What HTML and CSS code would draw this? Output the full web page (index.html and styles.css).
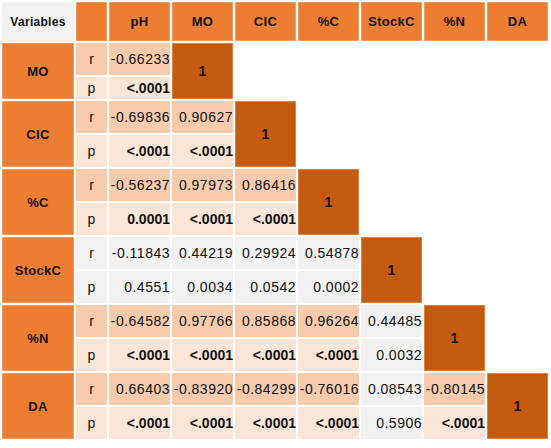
FILE: index.html
```html
<!DOCTYPE html>
<html>
<head>
<meta charset="utf-8">
<link rel="stylesheet" href="styles.css">
</head>
<body>
<table class="corr">
  <colgroup>
    <col class="c-var"><col class="c-rp">
    <col class="c-v"><col class="c-v"><col class="c-v"><col class="c-v"><col class="c-v"><col class="c-v"><col class="c-v">
  </colgroup>
  <thead>
    <tr class="hrow">
      <th class="hv">Variables</th>
      <th class="hd"></th>
      <th class="hd">pH</th>
      <th class="hd">MO</th>
      <th class="hd">CIC</th>
      <th class="hd">%C</th>
      <th class="hd">StockC</th>
      <th class="hd">%N</th>
      <th class="hd">DA</th>
    </tr>
  </thead>
  <tbody>
    <tr class="rr">
      <th class="lab" rowspan="2">MO</th>
      <td class="rp r">r</td>
      <td class="n r">-0.66233</td>
      <td class="one" rowspan="2">1</td>
      <td class="e" rowspan="2" colspan="5"></td>
    </tr>
    <tr class="pr short">
      <td class="rp p">p</td>
      <td class="n p b">&lt;.0001</td>
    </tr>

    <tr class="rr">
      <th class="lab" rowspan="2">CIC</th>
      <td class="rp r">r</td>
      <td class="n r">-0.69836</td>
      <td class="n r">0.90627</td>
      <td class="one" rowspan="2">1</td>
      <td class="e" rowspan="2" colspan="4"></td>
    </tr>
    <tr class="pr">
      <td class="rp p">p</td>
      <td class="n p b">&lt;.0001</td>
      <td class="n p b">&lt;.0001</td>
    </tr>

    <tr class="rr">
      <th class="lab" rowspan="2">%C</th>
      <td class="rp r">r</td>
      <td class="n r">-0.56237</td>
      <td class="n r">0.97973</td>
      <td class="n r">0.86416</td>
      <td class="one" rowspan="2">1</td>
      <td class="e" rowspan="2" colspan="3"></td>
    </tr>
    <tr class="pr">
      <td class="rp p">p</td>
      <td class="n p b">0.0001</td>
      <td class="n p b">&lt;.0001</td>
      <td class="n p b">&lt;.0001</td>
    </tr>

    <tr class="rr">
      <th class="lab" rowspan="2">StockC</th>
      <td class="rp g">r</td>
      <td class="n g">-0.11843</td>
      <td class="n g">0.44219</td>
      <td class="n g">0.29924</td>
      <td class="n g">0.54878</td>
      <td class="one" rowspan="2">1</td>
      <td class="e" rowspan="2" colspan="2"></td>
    </tr>
    <tr class="pr">
      <td class="rp g">p</td>
      <td class="n g">0.4551</td>
      <td class="n g">0.0034</td>
      <td class="n g">0.0542</td>
      <td class="n g">0.0002</td>
    </tr>

    <tr class="rr">
      <th class="lab" rowspan="2">%N</th>
      <td class="rp r">r</td>
      <td class="n r">-0.64582</td>
      <td class="n r">0.97766</td>
      <td class="n r">0.85868</td>
      <td class="n r">0.96264</td>
      <td class="n g">0.44485</td>
      <td class="one" rowspan="2">1</td>
      <td class="e" rowspan="2"></td>
    </tr>
    <tr class="pr">
      <td class="rp p">p</td>
      <td class="n p b">&lt;.0001</td>
      <td class="n p b">&lt;.0001</td>
      <td class="n p b">&lt;.0001</td>
      <td class="n p b">&lt;.0001</td>
      <td class="n g">0.0032</td>
    </tr>

    <tr class="rr">
      <th class="lab" rowspan="2">DA</th>
      <td class="rp r">r</td>
      <td class="n r">0.66403</td>
      <td class="n r">-0.83920</td>
      <td class="n r">-0.84299</td>
      <td class="n r">-0.76016</td>
      <td class="n g">0.08543</td>
      <td class="n r">-0.80145</td>
      <td class="one" rowspan="2">1</td>
    </tr>
    <tr class="pr">
      <td class="rp p">p</td>
      <td class="n p b">&lt;.0001</td>
      <td class="n p b">&lt;.0001</td>
      <td class="n p b">&lt;.0001</td>
      <td class="n p b">&lt;.0001</td>
      <td class="n g">0.5906</td>
      <td class="n p b">&lt;.0001</td>
    </tr>
  </tbody>
</table>
</body>
</html>
```

FILE: styles.css
```css
html, body {
  margin: 0;
  padding: 0;
  background: #ffffff;
}

.corr {
  border-collapse: separate;
  border-spacing: 2px;
  table-layout: fixed;
  width: 550px;
  font-family: "Liberation Sans", Arial, sans-serif;
  color: #111111;
}

.c-var { width: 72px; }
.c-rp { width: 31px; }
.c-v { width: 61px; }

.corr th,
.corr td {
  padding: 0;
  box-sizing: border-box;
}

.hrow { height: 39px; }
.rr { height: 32px; }
.pr { height: 32px; }
.pr.short { height: 22px; }

.hv {
  background: #f2f2f2;
  font-size: 12px;
  font-weight: bold;
  letter-spacing: 0.3px;
  text-align: center;
}

.hd {
  background: #ed7d31;
  border: 1px solid #f29a5c;
  font-size: 13px;
  font-weight: bold;
  letter-spacing: 0.3px;
  text-align: center;
}

.lab {
  background: #ed7d31;
  border: 1px solid #f29a5c;
  font-size: 13px;
  font-weight: bold;
  letter-spacing: 0.3px;
  text-align: center;
}

.rp {
  font-size: 14px;
  text-align: center;
}

.n {
  font-size: 14px;
  letter-spacing: 0.5px;
  text-align: right;
  padding-right: 1px;
  white-space: nowrap;
}

.n.b {
  font-weight: bold;
  letter-spacing: 0;
}

.r { background: #f8cbad; }
.p { background: #fbe5d6; }
.g { background: #f2f2f2; }

.one {
  background: #c55a11;
  border: 1px solid #e0803f;
  font-size: 14px;
  font-weight: bold;
  text-align: center;
}

.e { background: transparent; }
```
